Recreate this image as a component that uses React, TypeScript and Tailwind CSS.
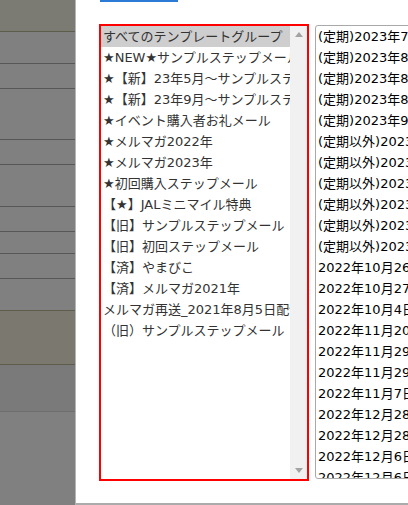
const GROUPS = [
  "すべてのテンプレートグループ",
  "★NEW★サンプルステップメール",
  "★【新】23年5月～サンプルステップメール",
  "★【新】23年9月～サンプルステップメール",
  "★イベント購入者お礼メール",
  "★メルマガ2022年",
  "★メルマガ2023年",
  "★初回購入ステップメール",
  "【★】JALミニマイル特典",
  "【旧】サンプルステップメール",
  "【旧】初回ステップメール",
  "【済】やまびこ",
  "【済】メルマガ2021年",
  "メルマガ再送_2021年8月5日配信",
  "（旧）サンプルステップメール",
];

const TEMPLATES = [
  "(定期)2023年7月分",
  "(定期)2023年8月分",
  "(定期)2023年8月分",
  "(定期)2023年8月分",
  "(定期)2023年9月分",
  "(定期以外)2023年",
  "(定期以外)2023年",
  "(定期以外)2023年",
  "(定期以外)2023年",
  "(定期以外)2023年",
  "(定期以外)2023年",
  "2022年10月26日",
  "2022年10月27日",
  "2022年10月4日",
  "2022年11月20日",
  "2022年11月29日",
  "2022年11月29日",
  "2022年11月7日",
  "2022年12月28日",
  "2022年12月28日",
  "2022年12月6日",
  "2022年12月6日",
];

// left sidebar strips under the overlay: [height, bg, border]
const SIDE = [
  ["h-[32px]", "bg-[#7b7a73]", "border-[#5e5c4a]"],
  ["h-[32px]", "bg-[#808080]", "border-[#575757]"],
  ["h-[25px]", "bg-[#808080]", "border-[#575757]"],
  ["h-[51px]", "bg-[#808080]", "border-[#575757]"],
  ["h-[25px]", "bg-[#808080]", "border-[#575757]"],
  ["h-[42px]", "bg-[#808080]", "border-[#575757]"],
  ["h-[25px]", "bg-[#808080]", "border-[#575757]"],
  ["h-[22px]", "bg-[#808080]", "border-[#575757]"],
  ["h-[25px]", "bg-[#808080]", "border-[#575757]"],
  ["h-[32px]", "bg-[#808080]", "border-[#5e5c4a]"],
  ["h-[54px]", "bg-[#7a786f]", "border-[#5e5c4a]"],
  ["h-[47px]", "bg-[#7a7a7a]", "border-[#6e6e6e]"],
];

export default function App() {
  return (
    <div
      className="flex w-[408px] h-[505px] overflow-hidden bg-white"
      style={{ fontFamily: '"DejaVu Sans", "Noto Sans CJK JP", sans-serif' }}
    >
      <div className="w-[75px] shrink-0 flex flex-col bg-[#808080]">
        {SIDE.map(([h, bg, bd], i) => (
          <div key={i} className={`${h} ${bg} ${bd} border-b shrink-0`} />
        ))}
      </div>
      <div className="w-px shrink-0 bg-[#b5b5b5]" />

      <div className="flex-1 min-w-0 flex flex-col border-b-2 border-[#ababab]">
        <div className="ml-[24px] w-[78px] h-[2px] bg-[#2a7ad6]" />

        <div className="flex items-start gap-[6px] mt-[22px] ml-[23px]">
          <div className="w-[210px] h-[457px] shrink-0 border-2 border-[#ff0000] flex bg-white">
            <div className="flex-1 min-w-0 overflow-hidden text-[13px] leading-[21px] text-[#333]">
              {GROUPS.map((g, i) => (
                <div
                  key={i}
                  className={`h-[21px] pl-[2px] whitespace-nowrap overflow-hidden ${
                    i === 0 ? "bg-[#cecece]" : ""
                  }`}
                >
                  {g}
                </div>
              ))}
            </div>
            <div className="w-[17px] shrink-0 bg-[#f1f1f1] flex flex-col justify-between items-center py-[6px]">
              <svg width="8" height="5" viewBox="0 0 8 5">
                <path d="M0 5 L4 0 L8 5 Z" fill="#a3a3a3" />
              </svg>
              <svg width="8" height="5" viewBox="0 0 8 5">
                <path d="M0 0 L8 0 L4 5 Z" fill="#a3a3a3" />
              </svg>
            </div>
          </div>

          <div className="w-[120px] h-[454px] shrink-0 mt-[1px] border border-[#a9a9a9] rounded-[3px] overflow-hidden bg-white text-[13px] leading-[21px] text-black">
            {TEMPLATES.map((t, i) => (
              <div key={i} className="h-[21px] pl-[2px] whitespace-nowrap">
                {t}
              </div>
            ))}
          </div>
        </div>
      </div>
    </div>
  );
}
